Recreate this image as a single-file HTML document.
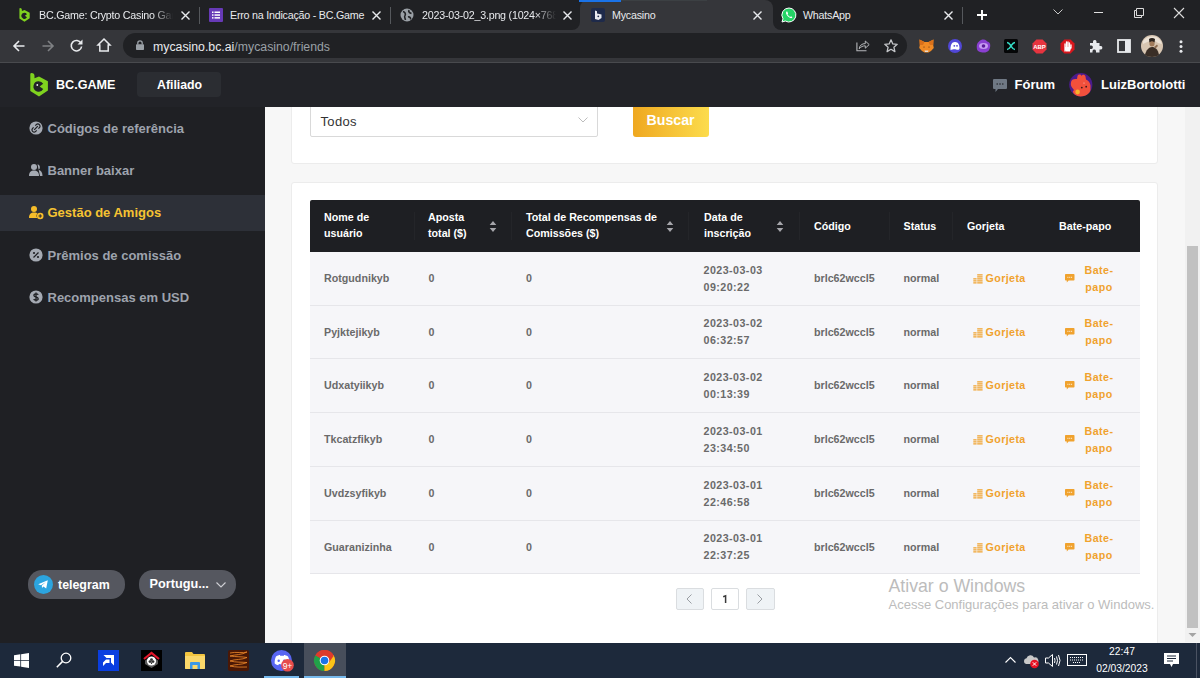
<!DOCTYPE html>
<html><head><meta charset="utf-8">
<style>
*{margin:0;padding:0;box-sizing:border-box}
html,body{width:1200px;height:678px;overflow:hidden;background:#f5f5f5;font-family:"Liberation Sans",sans-serif;position:relative}
.a{position:absolute}
svg{position:absolute;overflow:visible}
.tabt{position:absolute;color:#e8eaed;font-size:10.7px;top:8.3px;line-height:14px;white-space:nowrap;letter-spacing:-0.22px}
.sep{position:absolute;width:1px;height:17px;top:7px;background:#55585c}
.th{position:absolute;color:#fff;font-size:10.7px;font-weight:bold;line-height:16px;white-space:nowrap}
.td{position:absolute;color:#6a6a6a;font-size:10.7px;font-weight:bold;line-height:17px;white-space:nowrap}
.or{color:#f0a22e}
.sb{position:absolute;color:#9ea3ad;font-size:13px;font-weight:bold;white-space:nowrap;line-height:16px}

</style></head><body>
<!-- ===== content ===== -->
<div class="a" style="left:265px;top:107px;width:920px;height:535px;background:#f7f7f7"></div>
<div class="a" style="left:291px;top:90px;width:867px;height:74px;background:#fff;border:1px solid #ececec;border-radius:3px"></div>
<div class="a" style="left:310px;top:100px;width:288px;height:37px;background:#fff;border:1px solid #d9d9d9;border-radius:2px"></div>
<div class="a" style="left:320.5px;top:113.7px;font-size:13px;color:#333;letter-spacing:0.35px;line-height:16px;white-space:nowrap">Todos</div>
<svg style="left:578px;top:117px" width="10" height="6" viewBox="0 0 10 6"><path d="M0.5 0.5 L5 5 L9.5 0.5" stroke="#bdbdbd" stroke-width="1" fill="none"/></svg>
<div class="a" style="left:633px;top:100px;width:75.5px;height:37px;background:linear-gradient(90deg,#efa820,#fcdc4c);border-radius:3px"></div>
<div class="a" style="left:646.5px;top:112px;font-size:14.2px;font-weight:bold;color:#fff;line-height:16px;white-space:nowrap">Buscar</div>
<div class="a" style="left:291px;top:182px;width:867px;height:520px;background:#fff;border:1px solid #ececec;border-radius:3px"></div>
<div class="a" style="left:310px;top:200px;width:830px;height:51.5px;background:#1e1f23;border-radius:2px 2px 0 0"></div>
<div class="a" style="left:414px;top:212px;width:1px;height:28px;background:#242529"></div>
<div class="a" style="left:511px;top:212px;width:1px;height:28px;background:#242529"></div>
<div class="a" style="left:688px;top:212px;width:1px;height:28px;background:#242529"></div>
<div class="a" style="left:799px;top:212px;width:1px;height:28px;background:#242529"></div>
<div class="a" style="left:889px;top:212px;width:1px;height:28px;background:#242529"></div>
<div class="a" style="left:952px;top:212px;width:1px;height:28px;background:#242529"></div>
<div class="th" style="left:324px;top:209px">Nome de<br>usuário</div>
<div class="th" style="left:428px;top:209px">Aposta<br>total ($)</div>
<div class="th" style="left:526px;top:209px">Total de Recompensas de<br>Comissões ($)</div>
<div class="th" style="left:704px;top:209px">Data de<br>inscrição</div>
<div class="th" style="left:814px;top:217.5px">Código</div>
<div class="th" style="left:903.5px;top:217.5px">Status</div>
<div class="th" style="left:967px;top:217.5px">Gorjeta</div>
<div class="th" style="left:1059px;top:217.5px">Bate-papo</div>
<svg style="left:488.5px;top:220px" width="8" height="12" viewBox="0 0 8 12"><path d="M4 1 L7.3 5 H0.7 Z M4 12 L7.3 8 H0.7 Z" fill="#a5a5aa"/></svg>
<svg style="left:666px;top:220px" width="8" height="12" viewBox="0 0 8 12"><path d="M4 1 L7.3 5 H0.7 Z M4 12 L7.3 8 H0.7 Z" fill="#a5a5aa"/></svg>
<svg style="left:776px;top:220px" width="8" height="12" viewBox="0 0 8 12"><path d="M4 1 L7.3 5 H0.7 Z M4 12 L7.3 8 H0.7 Z" fill="#a5a5aa"/></svg>
<div class="a" style="left:310px;top:251.5px;width:830px;height:322px;background:#f6f6f9"></div>
<div class="a" style="left:310px;top:305px;width:830px;height:1px;background:#e6e6ea"></div>
<div class="a" style="left:310px;top:358px;width:830px;height:1px;background:#e6e6ea"></div>
<div class="a" style="left:310px;top:412px;width:830px;height:1px;background:#e6e6ea"></div>
<div class="a" style="left:310px;top:466px;width:830px;height:1px;background:#e6e6ea"></div>
<div class="a" style="left:310px;top:520px;width:830px;height:1px;background:#e6e6ea"></div>
<div class="a" style="left:310px;top:573px;width:830px;height:1px;background:#e6e6ea"></div>
<div class="td" style="left:324px;top:270.2px">Rotgudnikyb</div>
<div class="td" style="left:428.5px;top:270.2px">0</div>
<div class="td" style="left:526px;top:270.2px">0</div>
<div class="td" style="left:703.5px;top:261.7px;letter-spacing:0.45px">2023-03-03<br>09:20:22</div>
<div class="td" style="left:814px;top:270.2px">brlc62wccl5</div>
<div class="td" style="left:903.5px;top:270.2px">normal</div>
<svg style="left:973px;top:274.2px" width="10" height="9.5" viewBox="0 0 10 9.5"><path d="M4.2 0.9 H9.6 M4.2 2.9 H9.6 M4.2 4.9 H9.6 M4.2 6.9 H9.6 M4.2 8.9 H9.6 M0.3 4.9 H3.6 M0.3 6.9 H3.6 M0.3 8.9 H3.6" stroke="#f0a22e" stroke-width="1.15"/></svg>
<div class="td or" style="left:985.5px;top:270.2px;letter-spacing:0.4px">Gorjeta</div>
<svg style="left:1065px;top:274.2px" width="9.5" height="9" viewBox="0 0 9.5 9"><path d="M0.8 0 H8.7 Q9.5 0 9.5 0.8 V5.7 Q9.5 6.5 8.7 6.5 H3.6 L1.8 8.6 V6.5 H0.8 Q0 6.5 0 5.7 V0.8 Q0 0 0.8 0 Z" fill="#f0a22e"/><path d="M2.4 3.3 H3.4 M4.25 3.3 H5.25 M6.1 3.3 H7.1" stroke="#fff" stroke-width="0.9"/></svg>
<div class="td or" style="left:1079px;width:40px;text-align:center;top:261.7px;letter-spacing:0.45px">Bate-<br>papo</div>
<div class="td" style="left:324px;top:323.9px">Pyjktejikyb</div>
<div class="td" style="left:428.5px;top:323.9px">0</div>
<div class="td" style="left:526px;top:323.9px">0</div>
<div class="td" style="left:703.5px;top:315.4px;letter-spacing:0.45px">2023-03-02<br>06:32:57</div>
<div class="td" style="left:814px;top:323.9px">brlc62wccl5</div>
<div class="td" style="left:903.5px;top:323.9px">normal</div>
<svg style="left:973px;top:327.9px" width="10" height="9.5" viewBox="0 0 10 9.5"><path d="M4.2 0.9 H9.6 M4.2 2.9 H9.6 M4.2 4.9 H9.6 M4.2 6.9 H9.6 M4.2 8.9 H9.6 M0.3 4.9 H3.6 M0.3 6.9 H3.6 M0.3 8.9 H3.6" stroke="#f0a22e" stroke-width="1.15"/></svg>
<div class="td or" style="left:985.5px;top:323.9px;letter-spacing:0.4px">Gorjeta</div>
<svg style="left:1065px;top:327.9px" width="9.5" height="9" viewBox="0 0 9.5 9"><path d="M0.8 0 H8.7 Q9.5 0 9.5 0.8 V5.7 Q9.5 6.5 8.7 6.5 H3.6 L1.8 8.6 V6.5 H0.8 Q0 6.5 0 5.7 V0.8 Q0 0 0.8 0 Z" fill="#f0a22e"/><path d="M2.4 3.3 H3.4 M4.25 3.3 H5.25 M6.1 3.3 H7.1" stroke="#fff" stroke-width="0.9"/></svg>
<div class="td or" style="left:1079px;width:40px;text-align:center;top:315.4px;letter-spacing:0.45px">Bate-<br>papo</div>
<div class="td" style="left:324px;top:377.4px">Udxatyiikyb</div>
<div class="td" style="left:428.5px;top:377.4px">0</div>
<div class="td" style="left:526px;top:377.4px">0</div>
<div class="td" style="left:703.5px;top:368.9px;letter-spacing:0.45px">2023-03-02<br>00:13:39</div>
<div class="td" style="left:814px;top:377.4px">brlc62wccl5</div>
<div class="td" style="left:903.5px;top:377.4px">normal</div>
<svg style="left:973px;top:381.4px" width="10" height="9.5" viewBox="0 0 10 9.5"><path d="M4.2 0.9 H9.6 M4.2 2.9 H9.6 M4.2 4.9 H9.6 M4.2 6.9 H9.6 M4.2 8.9 H9.6 M0.3 4.9 H3.6 M0.3 6.9 H3.6 M0.3 8.9 H3.6" stroke="#f0a22e" stroke-width="1.15"/></svg>
<div class="td or" style="left:985.5px;top:377.4px;letter-spacing:0.4px">Gorjeta</div>
<svg style="left:1065px;top:381.4px" width="9.5" height="9" viewBox="0 0 9.5 9"><path d="M0.8 0 H8.7 Q9.5 0 9.5 0.8 V5.7 Q9.5 6.5 8.7 6.5 H3.6 L1.8 8.6 V6.5 H0.8 Q0 6.5 0 5.7 V0.8 Q0 0 0.8 0 Z" fill="#f0a22e"/><path d="M2.4 3.3 H3.4 M4.25 3.3 H5.25 M6.1 3.3 H7.1" stroke="#fff" stroke-width="0.9"/></svg>
<div class="td or" style="left:1079px;width:40px;text-align:center;top:368.9px;letter-spacing:0.45px">Bate-<br>papo</div>
<div class="td" style="left:324px;top:431.2px">Tkcatzfikyb</div>
<div class="td" style="left:428.5px;top:431.2px">0</div>
<div class="td" style="left:526px;top:431.2px">0</div>
<div class="td" style="left:703.5px;top:422.8px;letter-spacing:0.45px">2023-03-01<br>23:34:50</div>
<div class="td" style="left:814px;top:431.2px">brlc62wccl5</div>
<div class="td" style="left:903.5px;top:431.2px">normal</div>
<svg style="left:973px;top:435.2px" width="10" height="9.5" viewBox="0 0 10 9.5"><path d="M4.2 0.9 H9.6 M4.2 2.9 H9.6 M4.2 4.9 H9.6 M4.2 6.9 H9.6 M4.2 8.9 H9.6 M0.3 4.9 H3.6 M0.3 6.9 H3.6 M0.3 8.9 H3.6" stroke="#f0a22e" stroke-width="1.15"/></svg>
<div class="td or" style="left:985.5px;top:431.2px;letter-spacing:0.4px">Gorjeta</div>
<svg style="left:1065px;top:435.2px" width="9.5" height="9" viewBox="0 0 9.5 9"><path d="M0.8 0 H8.7 Q9.5 0 9.5 0.8 V5.7 Q9.5 6.5 8.7 6.5 H3.6 L1.8 8.6 V6.5 H0.8 Q0 6.5 0 5.7 V0.8 Q0 0 0.8 0 Z" fill="#f0a22e"/><path d="M2.4 3.3 H3.4 M4.25 3.3 H5.25 M6.1 3.3 H7.1" stroke="#fff" stroke-width="0.9"/></svg>
<div class="td or" style="left:1079px;width:40px;text-align:center;top:422.8px;letter-spacing:0.45px">Bate-<br>papo</div>
<div class="td" style="left:324px;top:485.1px">Uvdzsyfikyb</div>
<div class="td" style="left:428.5px;top:485.1px">0</div>
<div class="td" style="left:526px;top:485.1px">0</div>
<div class="td" style="left:703.5px;top:476.6px;letter-spacing:0.45px">2023-03-01<br>22:46:58</div>
<div class="td" style="left:814px;top:485.1px">brlc62wccl5</div>
<div class="td" style="left:903.5px;top:485.1px">normal</div>
<svg style="left:973px;top:489.1px" width="10" height="9.5" viewBox="0 0 10 9.5"><path d="M4.2 0.9 H9.6 M4.2 2.9 H9.6 M4.2 4.9 H9.6 M4.2 6.9 H9.6 M4.2 8.9 H9.6 M0.3 4.9 H3.6 M0.3 6.9 H3.6 M0.3 8.9 H3.6" stroke="#f0a22e" stroke-width="1.15"/></svg>
<div class="td or" style="left:985.5px;top:485.1px;letter-spacing:0.4px">Gorjeta</div>
<svg style="left:1065px;top:489.1px" width="9.5" height="9" viewBox="0 0 9.5 9"><path d="M0.8 0 H8.7 Q9.5 0 9.5 0.8 V5.7 Q9.5 6.5 8.7 6.5 H3.6 L1.8 8.6 V6.5 H0.8 Q0 6.5 0 5.7 V0.8 Q0 0 0.8 0 Z" fill="#f0a22e"/><path d="M2.4 3.3 H3.4 M4.25 3.3 H5.25 M6.1 3.3 H7.1" stroke="#fff" stroke-width="0.9"/></svg>
<div class="td or" style="left:1079px;width:40px;text-align:center;top:476.6px;letter-spacing:0.45px">Bate-<br>papo</div>
<div class="td" style="left:324px;top:538.5px">Guaranizinha</div>
<div class="td" style="left:428.5px;top:538.5px">0</div>
<div class="td" style="left:526px;top:538.5px">0</div>
<div class="td" style="left:703.5px;top:530.0px;letter-spacing:0.45px">2023-03-01<br>22:37:25</div>
<div class="td" style="left:814px;top:538.5px">brlc62wccl5</div>
<div class="td" style="left:903.5px;top:538.5px">normal</div>
<svg style="left:973px;top:542.5px" width="10" height="9.5" viewBox="0 0 10 9.5"><path d="M4.2 0.9 H9.6 M4.2 2.9 H9.6 M4.2 4.9 H9.6 M4.2 6.9 H9.6 M4.2 8.9 H9.6 M0.3 4.9 H3.6 M0.3 6.9 H3.6 M0.3 8.9 H3.6" stroke="#f0a22e" stroke-width="1.15"/></svg>
<div class="td or" style="left:985.5px;top:538.5px;letter-spacing:0.4px">Gorjeta</div>
<svg style="left:1065px;top:542.5px" width="9.5" height="9" viewBox="0 0 9.5 9"><path d="M0.8 0 H8.7 Q9.5 0 9.5 0.8 V5.7 Q9.5 6.5 8.7 6.5 H3.6 L1.8 8.6 V6.5 H0.8 Q0 6.5 0 5.7 V0.8 Q0 0 0.8 0 Z" fill="#f0a22e"/><path d="M2.4 3.3 H3.4 M4.25 3.3 H5.25 M6.1 3.3 H7.1" stroke="#fff" stroke-width="0.9"/></svg>
<div class="td or" style="left:1079px;width:40px;text-align:center;top:530.0px;letter-spacing:0.45px">Bate-<br>papo</div>
<div class="a" style="left:676px;top:588px;width:28px;height:22px;background:#eff3f6;border:1px solid #dadde0;border-radius:2px"></div>
<svg style="left:686px;top:594px" width="6" height="10" viewBox="0 0 6 10"><path d="M5.5 0.5 L1 5 L5.5 9.5" stroke="#9a9ea3" stroke-width="1" fill="none"/></svg>
<div class="a" style="left:711px;top:588px;width:28px;height:22px;background:#fff;border:1px solid #dadde0;border-radius:2px"></div>
<svg style="left:722px;top:595px" width="6" height="9" viewBox="0 0 6 9"><path d="M1.2 1.8 L3.6 0.9 V8.1" stroke="#3a3a3a" stroke-width="1.5" fill="none"/></svg>
<div class="a" style="left:746px;top:588px;width:29px;height:22px;background:#eff3f6;border:1px solid #dadde0;border-radius:2px"></div>
<svg style="left:757px;top:594px" width="6" height="10" viewBox="0 0 6 10"><path d="M0.5 0.5 L5 5 L0.5 9.5" stroke="#9a9ea3" stroke-width="1" fill="none"/></svg>
<div class="a" style="left:888.5px;top:575px;font-size:17.7px;color:#bcbcbc;line-height:22px;white-space:nowrap">Ativar o Windows</div>
<div class="a" style="left:888.5px;top:596.5px;font-size:13px;color:#bcbcbc;line-height:16px;white-space:nowrap">Acesse Configurações para ativar o Windows.</div>
<div class="a" style="left:1185px;top:107px;width:15px;height:535px;background:#f1f1f1"></div>
<div class="a" style="left:1187px;top:246px;width:11px;height:382px;background:#c1c1c1"></div>
<svg style="left:1188px;top:632px" width="9" height="6" viewBox="0 0 9 6"><path d="M0.5 1 L4.5 5 L8.5 1 Z" fill="#a3a3a3"/></svg>
<!-- ===== Chrome tab strip ===== -->
<div class="a" style="left:0;top:0;width:1200px;height:30px;background:#202124"></div>
<div class="a" style="left:580px;top:0;width:193px;height:31px;background:#35363a;border-radius:8px 8px 0 0"></div>
<div class="a" style="left:572px;top:22px;width:8px;height:8px;background:#35363a"></div>
<div class="a" style="left:564px;top:14px;width:16px;height:16px;background:#202124;border-radius:0 0 8px 0"></div>
<div class="a" style="left:773px;top:22px;width:8px;height:8px;background:#35363a"></div>
<div class="a" style="left:773px;top:14px;width:16px;height:16px;background:#202124;border-radius:0 0 0 8px"></div>
<div class="a" style="left:579px;top:0;width:42px;height:2px;background:#1a73e8"></div>
<div class="a" style="left:621px;top:0;width:86px;height:1px;background:#3c4043"></div>
<div class="sep" style="left:199px"></div>
<div class="sep" style="left:390px"></div>
<div class="sep" style="left:962px"></div>
<!-- tab1 -->
<svg style="left:19px;top:8px" width="11" height="14" viewBox="0 0 18 24"><path d="M0.3 1.2 Q0.3 0 1.5 0 Q4.5 0 4.5 3 V5.2 L9 3.6 L17.9 8.3 V17.6 L9 23.4 L0.3 18 Z" fill="#7fd21f"/><path d="M8.7 8.3 A5.2 5.2 0 1 0 13.2 16 L9.6 13.4 L13.2 10.8 A5.2 5.2 0 0 0 8.7 8.3 Z" fill="#202124"/></svg>
<div class="tabt" style="left:39px;width:134px;overflow:hidden;-webkit-mask-image:linear-gradient(90deg,#000 85%,transparent)">BC.Game: Crypto Casino Games</div>
<svg style="left:181px;top:11px" width="9" height="9" viewBox="0 0 9 9"><path d="M0.5 0.5 L8.5 8.5 M8.5 0.5 L0.5 8.5" stroke="#e8eaed" stroke-width="1.4"/></svg>
<!-- tab2 -->
<svg style="left:209px;top:8px" width="14" height="14" viewBox="0 0 14 14"><rect width="14" height="14" rx="1" fill="#673ab7"/><rect x="3" y="3.5" width="1.5" height="1.5" fill="#fff"/><rect x="5.5" y="3.5" width="5.5" height="1.5" fill="#fff"/><rect x="3" y="6.3" width="1.5" height="1.5" fill="#fff"/><rect x="5.5" y="6.3" width="5.5" height="1.5" fill="#fff"/><rect x="3" y="9.1" width="1.5" height="1.5" fill="#fff"/><rect x="5.5" y="9.1" width="5.5" height="1.5" fill="#fff"/></svg>
<div class="tabt" style="left:230px">Erro na Indicação - BC.Game</div>
<svg style="left:372px;top:11px" width="9" height="9" viewBox="0 0 9 9"><path d="M0.5 0.5 L8.5 8.5 M8.5 0.5 L0.5 8.5" stroke="#e8eaed" stroke-width="1.4"/></svg>
<!-- tab3 -->
<svg style="left:400px;top:8px" width="14" height="14" viewBox="0 0 14 14"><circle cx="7" cy="7" r="6.5" fill="#9aa0a6"/><path d="M3 3.5 C5 4 6 6 5 7.5 C4 8.5 5 10 5.5 12 M9 2 C8 4 10 5 11.5 5.5 M8 9 C9.5 8.5 11 9.5 10.5 11.5" stroke="#202124" stroke-width="1.6" fill="none"/></svg>
<div class="tabt" style="left:422px;width:134px;overflow:hidden;-webkit-mask-image:linear-gradient(90deg,#000 85%,transparent)">2023-03-02_3.png (1024×768)</div>
<svg style="left:563px;top:11px" width="9" height="9" viewBox="0 0 9 9"><path d="M0.5 0.5 L8.5 8.5 M8.5 0.5 L0.5 8.5" stroke="#e8eaed" stroke-width="1.4"/></svg>
<!-- active tab -->
<svg style="left:591px;top:8px" width="14" height="14" viewBox="0 0 14 14"><rect width="14" height="14" rx="2" fill="#1e2a4a"/><path d="M4 2.5 V11 L7.5 12 L10.5 10 V6.5 L6 5.5 V3.3 Z" fill="#e8eaf0"/><circle cx="7.3" cy="8.3" r="0.9" fill="#1e2a4a"/></svg>
<div class="tabt" style="left:612px">Mycasino</div>
<svg style="left:753px;top:11px" width="9" height="9" viewBox="0 0 9 9"><path d="M0.5 0.5 L8.5 8.5 M8.5 0.5 L0.5 8.5" stroke="#e8eaed" stroke-width="1.4"/></svg>
<!-- whatsapp -->
<svg style="left:781px;top:7px" width="16" height="16" viewBox="0 0 16 16"><path d="M8 1 A7 7 0 1 1 4.3 14 L1 15 L2 11.8 A7 7 0 0 1 8 1 Z" fill="#25d366" stroke="#fff" stroke-width="1"/><path d="M5.5 4.5 C5 5 4.8 6 5.5 7.5 C6.3 9 7.5 10.3 9.3 11 C10.5 11.4 11.2 10.8 11.4 10.2 L10 9.3 L9.2 9.9 C8.2 9.5 7 8.2 6.5 7.2 L7.1 6.4 L6.3 4.6 Z" fill="#fff"/></svg>
<div class="tabt" style="left:803px">WhatsApp</div>
<svg style="left:944px;top:11px" width="9" height="9" viewBox="0 0 9 9"><path d="M0.5 0.5 L8.5 8.5 M8.5 0.5 L0.5 8.5" stroke="#e8eaed" stroke-width="1.4"/></svg>
<!-- new tab + -->
<svg style="left:977px;top:10px" width="10" height="10" viewBox="0 0 10 10"><path d="M5 0 V10 M0 5 H10" stroke="#ffffff" stroke-width="1.9"/></svg>
<!-- window controls -->
<svg style="left:1053px;top:9px" width="10" height="6" viewBox="0 0 10 6"><path d="M0.5 0.5 L5 5 L9.5 0.5" stroke="#c7c7c7" stroke-width="1" fill="none"/></svg>
<svg style="left:1094px;top:12px" width="9" height="1" viewBox="0 0 9 1"><path d="M0 0.5 H9" stroke="#e0e0e0" stroke-width="1"/></svg>
<svg style="left:1134px;top:8px" width="10" height="10" viewBox="0 0 10 10"><path d="M2.5 2.5 H0.5 V9.5 H7.5 V7.5 M2.5 2.5 V0.5 H9.5 V7.5 H2.5 Z" stroke="#dcdcdc" stroke-width="1" fill="none"/></svg>
<svg style="left:1174px;top:8px" width="10" height="10" viewBox="0 0 10 10"><path d="M0 0 L10 10 M10 0 L0 10" stroke="#dcdcdc" stroke-width="1.1"/></svg>
<!-- ===== toolbar ===== -->
<div class="a" style="left:0;top:30px;width:1200px;height:32px;background:#35363a"></div>
<div class="a" style="left:0;top:62px;width:1200px;height:1px;background:#494a4e"></div>
<svg style="left:13px;top:40px" width="12" height="12" viewBox="0 0 12 12"><path d="M11.5 6 H1.2 M6 1 L1 6 L6 11" stroke="#e8eaed" stroke-width="1.6" fill="none"/></svg>
<svg style="left:42px;top:40px" width="12" height="12" viewBox="0 0 12 12"><path d="M0.5 6 H10.8 M6 1 L11 6 L6 11" stroke="#7f8184" stroke-width="1.6" fill="none"/></svg>
<svg style="left:70px;top:39px" width="13" height="13" viewBox="0 0 13 13"><path d="M11 4.2 A5.2 5.2 0 1 0 11.6 7.5" stroke="#e8eaed" stroke-width="1.6" fill="none"/><path d="M12.5 0.5 V5.5 H7.5 Z" fill="#e8eaed"/></svg>
<svg style="left:97px;top:38px" width="14" height="14" viewBox="0 0 14 14"><path d="M7 1 L13 7 H11.2 V13 H2.8 V7 H1 Z" stroke="#e8eaed" stroke-width="1.5" fill="none" stroke-linejoin="miter"/></svg>
<div class="a" style="left:123px;top:33px;width:784px;height:25px;background:#202124;border-radius:12.5px"></div>
<svg style="left:136px;top:40px" width="8" height="10" viewBox="0 0 8 10"><path d="M1.8 4.5 V3 A2.2 2.2 0 0 1 6.2 3 V4.5" stroke="#9aa0a6" stroke-width="1.3" fill="none"/><rect x="0" y="4.3" width="8" height="5.7" rx="0.8" fill="#9aa0a6"/></svg>
<div class="a" style="left:153px;top:39px;font-size:12.3px;line-height:16px;color:#e8eaed;white-space:nowrap">mycasino.bc.ai<span style="color:#9aa0a6">/mycasino/friends</span></div>
<svg style="left:856px;top:39px" width="14" height="13" viewBox="0 0 14 13"><path d="M0.9 3.5 V11.8 H10.5" stroke="#b5b7ba" stroke-width="1.1" fill="none"/><path d="M3.2 9.8 C3.6 6.3 6 4.6 9.3 4.6 V2 L13.2 5.6 L9.3 9.2 V6.8 C6.8 6.8 4.8 7.8 3.2 9.8 Z" stroke="#b5b7ba" stroke-width="1" fill="none" stroke-linejoin="round"/></svg>
<svg style="left:884px;top:39px" width="14" height="14" viewBox="0 0 14 14"><path d="M7 0.8 L8.8 4.9 L13.2 5.3 L9.9 8.2 L10.9 12.6 L7 10.3 L3.1 12.6 L4.1 8.2 L0.8 5.3 L5.2 4.9 Z" stroke="#c4c6c9" stroke-width="1.3" fill="none" stroke-linejoin="round"/></svg>
<!-- extensions -->
<svg style="left:918.5px;top:39px" width="15" height="14" viewBox="0 0 15 14"><path d="M0.5 0.5 L5.5 3 H9.5 L14.5 0.5 L14.2 6 L14.8 9 L12 12 L9.5 13.5 H5.5 L3 12 L0.2 9 L0.8 6 Z" fill="#f08a24"/><path d="M0.5 0.5 L5.5 3 L4 6 L0.8 6 Z M14.5 0.5 L9.5 3 L11 6 L14.2 6 Z" fill="#d9701a"/><path d="M5.5 11.5 H9.5 L9 13 H6 Z" fill="#e8dccf"/><circle cx="5" cy="8" r="0.6" fill="#5a3010"/><circle cx="10" cy="8" r="0.6" fill="#5a3010"/></svg>
<svg style="left:948px;top:39px" width="14" height="14" viewBox="0 0 14 14"><circle cx="7" cy="7" r="7" fill="#5147d6"/><path d="M2.5 11 C2.5 6 3.5 3 7 3 C10.5 3 11.5 6 11.5 9 C11.5 11 10 11 8 10.5 C6 10 4 11 2.5 11 Z" fill="#fff"/><circle cx="6.3" cy="6.8" r="0.9" fill="#5147d6"/><circle cx="9" cy="6.8" r="0.9" fill="#5147d6"/></svg>
<svg style="left:976px;top:39px" width="15" height="14" viewBox="0 0 15 14"><path d="M7.5 0.5 C10 0.5 10.5 2.5 12.5 3 C14.5 4 14.5 6.5 14 8.5 C13.5 11 12 13.5 8 13.5 C4 13.5 1 12.5 0.8 9 C0.5 6 1 4 3 2.5 C4.5 1 5.5 0.5 7.5 0.5 Z" fill="#8a3fd1"/><ellipse cx="7.5" cy="7" rx="4.5" ry="3" fill="#c79bf2"/><circle cx="7.5" cy="7" r="1.8" fill="#5b1c99"/></svg>
<svg style="left:1004px;top:39px" width="14" height="14" viewBox="0 0 14 14"><rect width="14" height="14" rx="1.5" fill="#050607"/><path d="M3 3.5 C5 3.5 6 5.5 7 7 C8 8.5 9 10.5 11 10.5 M3 10.5 C5 10.5 6 8.5 7 7 C8 5.5 9 3.5 11 3.5" stroke="#34d9c3" stroke-width="1.6" fill="none"/></svg>
<svg style="left:1032px;top:39px" width="15" height="15" viewBox="0 0 15 15"><path d="M4.4 0.5 H10.6 L14.5 4.4 V10.6 L10.6 14.5 H4.4 L0.5 10.6 V4.4 Z" fill="#e7343f"/><text x="7.5" y="10" font-family="Liberation Sans" font-weight="bold" font-size="6" fill="#fff" text-anchor="middle">ABP</text></svg>
<svg style="left:1060px;top:39px" width="15" height="15" viewBox="0 0 15 15"><path d="M4.4 0.5 H10.6 L14.5 4.4 V10.6 L10.6 14.5 H4.4 L0.5 10.6 V4.4 Z" fill="#d9161c"/><path d="M5 12 V5 M6.5 11 V3 M8 11 V3 M9.5 11 V4 M11 9 V6" stroke="#fff" stroke-width="1.3" stroke-linecap="round"/><path d="M5 11 L6 12.5 H10 L11 9 V8 L5 8 Z" fill="#fff"/></svg>
<svg style="left:1089px;top:39px" width="14" height="14" viewBox="0 0 14 14"><path d="M1 4 H4 V2.5 A1.8 1.8 0 0 1 7.5 2.5 V4 H10.5 V7 H12 A1.8 1.8 0 0 1 12 10.5 H10.5 V13.5 H7 V12 A1.8 1.8 0 0 0 3.5 12 V13.5 H1 V10 H2.5 A1.8 1.8 0 0 0 2.5 6.5 H1 Z" fill="#e8eaed"/></svg>
<svg style="left:1117px;top:39px" width="14" height="14" viewBox="0 0 14 14"><rect x="1" y="1" width="12" height="12" stroke="#e8eaed" stroke-width="1.8" fill="none"/><rect x="8" y="1" width="5" height="12" fill="#e8eaed"/></svg>
<svg style="left:1141px;top:35px" width="22" height="22" viewBox="0 0 22 22"><circle cx="11" cy="11" r="11" fill="#d8c6b2"/><path d="M2 6 C5 2 9 1 13 1.5 C17 2 20 5 21 9 L17 8 C15 6 12 5 9 6 C6 7 4 8 2 9 Z" fill="#ece2d6"/><path d="M8 4 C9.5 2.8 12.5 2.8 14 4 L13.6 7.5 L8.4 7.5 Z" fill="#2a221c"/><circle cx="11" cy="8.8" r="2.6" fill="#a07a5a"/><path d="M4 20 C5 15 8 12 11 12 C14 12 17 14 18 20 C15 22.5 7 22.5 4 20 Z" fill="#3a2e26"/><path d="M13 12 L16 9.5 L17 11 L14.5 13.5 Z" fill="#8b6b50"/></svg>
<svg style="left:1179px;top:40px" width="4" height="13" viewBox="0 0 4 13"><circle cx="2" cy="1.8" r="1.5" fill="#e8eaed"/><circle cx="2" cy="6.5" r="1.5" fill="#e8eaed"/><circle cx="2" cy="11.2" r="1.5" fill="#e8eaed"/></svg>
<!-- ===== BC header ===== -->
<div class="a" style="left:0;top:63px;width:1200px;height:44px;background:#222328"></div>
<svg style="left:30px;top:72.7px" width="18" height="24" viewBox="0 0 18 24"><path d="M0.3 1.2 Q0.3 0 1.5 0 Q4.5 0 4.5 3 V5.2 L9 3.6 L17.9 8.3 V17.6 L9 23.4 L0.3 18 Z" fill="#7fd21f"/><path d="M8.7 8.3 A5.2 5.2 0 1 0 13.2 16 L9.6 13.4 L13.2 10.8 A5.2 5.2 0 0 0 8.7 8.3 Z" fill="#222328"/><circle cx="7.3" cy="12" r="0.9" fill="#eee"/></svg>
<div class="a" style="left:56px;top:78px;font-size:12.6px;font-weight:bold;color:#fff;line-height:15px;white-space:nowrap">BC.GAME</div>
<div class="a" style="left:137px;top:72px;width:84px;height:25px;background:#2b2d32;border-radius:4px"></div>
<div class="a" style="left:157px;top:78px;font-size:12.3px;font-weight:bold;color:#fff;line-height:15px;white-space:nowrap">Afiliado</div>
<svg style="left:993px;top:79px" width="14" height="14" viewBox="0 0 14 14"><path d="M1 0 H13 Q14 0 14 1 V9 Q14 10 13 10 H5 L2.5 13 V10 H1 Q0 10 0 9 V1 Q0 0 1 0 Z" fill="#6f7884"/><circle cx="4.2" cy="5" r="0.8" fill="#222328"/><circle cx="7" cy="5" r="0.8" fill="#222328"/><circle cx="9.8" cy="5" r="0.8" fill="#222328"/></svg>
<div class="a" style="left:1014.5px;top:77px;font-size:13px;font-weight:bold;color:#fff;line-height:15px;white-space:nowrap">Fórum</div>
<svg style="left:1069px;top:73px" width="24" height="24" viewBox="0 0 24 24"><circle cx="11.8" cy="11.7" r="11.6" fill="#4b1b8c"/><path d="M2 9.5 C2 6.5 5 5.5 8 6 L8.5 3 C9.5 1 12 1.2 12.5 3 C13.5 1 16 1.5 16.5 3.5 L17 6.5 C19.5 7.5 21 9.5 21.5 12.5 L21.5 17 C20.5 21 16 23.5 11.5 23.4 C7.5 23.2 4.5 21.5 3.8 18.5 L5 17 L3 14.5 C1.8 13 1.6 11 2 9.5 Z" fill="#f2503c"/><ellipse cx="8.6" cy="19" rx="2.3" ry="2.4" fill="#f5b32a"/><circle cx="12.8" cy="14.6" r="0.9" fill="#3a1a1a"/><circle cx="17.2" cy="13.7" r="0.9" fill="#3a1a1a"/><circle cx="15" cy="10" r="0.6" fill="#ffd0c8"/></svg>
<div class="a" style="left:1101px;top:77px;font-size:13px;font-weight:bold;color:#fff;line-height:15px;white-space:nowrap">LuizBortolotti</div>
<!-- ===== sidebar ===== -->
<div class="a" style="left:0;top:107px;width:265px;height:536px;background:#1f2024"></div>
<div class="a" style="left:0;top:195px;width:265px;height:36px;background:#2d3038"></div>
<svg style="left:29px;top:121px" width="14" height="14" viewBox="0 0 14 14"><circle cx="7" cy="7" r="6.6" fill="#a5aab3"/><path d="M5.2 8.8 L8.8 5.2 M6.3 4.6 L7.3 3.6 A1.7 1.7 0 0 1 10.4 6.7 L9.4 7.7 M7.7 9.4 L6.7 10.4 A1.7 1.7 0 0 1 3.6 7.3 L4.6 6.3" stroke="#1e1f23" stroke-width="1.2" fill="none"/></svg>
<div class="sb" style="left:47.5px;top:120.6px">Códigos de referência</div>
<svg style="left:29px;top:163px" width="14" height="14" viewBox="0 0 14 14"><circle cx="5" cy="4" r="3" fill="#a5aab3"/><path d="M0 13 C0 9 2 7.5 5 7.5 C8 7.5 10 9 10 13 Z" fill="#a5aab3"/><path d="M8.5 1.3 A3 3 0 0 1 9.5 6.8 C12 7.5 13.5 9.5 13.5 13 H11" fill="#a5aab3"/></svg>
<div class="sb" style="left:47.5px;top:162.6px">Banner baixar</div>
<svg style="left:29px;top:205px" width="15" height="15" viewBox="0 0 15 15"><circle cx="5" cy="4" r="3" fill="#f6bd2a"/><path d="M0 13 C0 9 2 7.5 5 7.5 C7 7.5 8 8 8.5 8.5 A3.5 3.5 0 0 0 8.3 13 Z" fill="#f6bd2a"/><circle cx="11.2" cy="11" r="3.3" fill="#f6bd2a"/><path d="M11.2 9.3 V12.7 M9.5 11 H12.9" stroke="#2c2e35" stroke-width="1.1"/></svg>
<div class="sb" style="left:47.5px;top:205px;color:#f6c332">Gestão de Amigos</div>
<svg style="left:29px;top:248px" width="14" height="14" viewBox="0 0 14 14"><circle cx="7" cy="7" r="6.6" fill="#a5aab3"/><path d="M4.5 9.5 L9.5 4.5" stroke="#1e1f23" stroke-width="1.2"/><circle cx="5" cy="5" r="1.1" fill="#1e1f23"/><circle cx="9" cy="9" r="1.1" fill="#1e1f23"/></svg>
<div class="sb" style="left:47.5px;top:247.6px">Prêmios de comissão</div>
<svg style="left:29px;top:290px" width="14" height="14" viewBox="0 0 14 14"><circle cx="7" cy="7" r="6.6" fill="#a5aab3"/><path d="M9.2 4.8 C8.8 4 8 3.8 7 3.8 C5.7 3.8 4.9 4.5 4.9 5.4 C4.9 7.5 9.2 6.5 9.2 8.7 C9.2 9.6 8.3 10.2 7 10.2 C6 10.2 5.1 9.9 4.7 9.1 M7 2.6 V11.4" stroke="#1e1f23" stroke-width="1.3" fill="none"/></svg>
<div class="sb" style="left:47.5px;top:289.6px">Recompensas em USD</div>
<!-- bottom pills -->
<div class="a" style="left:28px;top:570px;width:97px;height:28.5px;background:#55575f;border-radius:14px"></div>
<svg style="left:33.5px;top:574.8px" width="19" height="19" viewBox="0 0 19 19"><circle cx="9.5" cy="9.5" r="9.5" fill="#2ca5e0"/><path d="M4.2 9.3 L13.8 5.3 L12.2 13.6 L9.4 11.6 L8 13 L7.8 10.6 L12 6.9 L6.9 10.2 Z" fill="#fff"/></svg>
<div class="a" style="left:58px;top:577px;font-size:12.4px;font-weight:bold;color:#fff;line-height:16px;white-space:nowrap">telegram</div>
<div class="a" style="left:139px;top:570px;width:97px;height:28.5px;background:#55575f;border-radius:14px"></div>
<div class="a" style="left:149.5px;top:576px;font-size:12.7px;font-weight:bold;color:#fff;line-height:16px;white-space:nowrap">Portugu...</div>
<svg style="left:216px;top:582px" width="10" height="6" viewBox="0 0 10 6"><path d="M0.5 0.5 L5 5 L9.5 0.5" stroke="#d0d0d5" stroke-width="1.1" fill="none"/></svg>
<!-- ===== taskbar ===== -->
<div class="a" style="left:0;top:642.5px;width:1200px;height:36px;background:#1d293b"></div>
<svg style="left:14px;top:653px" width="15" height="15" viewBox="0 0 15 15"><path d="M0 2.2 L6.3 1.3 V7 H0 Z M7.1 1.2 L15 0 V7 H7.1 Z M0 7.8 H6.3 V13.6 L0 12.8 Z M7.1 7.8 H15 V15 L7.1 13.8 Z" fill="#ffffff"/></svg>
<svg style="left:56px;top:652px" width="16" height="16" viewBox="0 0 16 16"><circle cx="10" cy="6" r="4.8" stroke="#fff" stroke-width="1.3" fill="none"/><path d="M6.6 9.4 L0.8 15.2" stroke="#fff" stroke-width="1.5"/></svg>
<div class="a" style="left:98px;top:650px;width:21px;height:21px;background:#0a3ee0"></div>
<svg style="left:98px;top:650px" width="21" height="21" viewBox="0 0 21 21"><path d="M5.5 5 H16 V15.5 L13 12.5 V8 H8.5 Z" fill="#fff"/><path d="M8 9.5 H11.5 V13 H8 L5 16 V12.5 Z" fill="#fff"/></svg>
<div class="a" style="left:141px;top:650px;width:21px;height:21px;background:#000"></div>
<svg style="left:141px;top:650px" width="21" height="21" viewBox="0 0 21 21"><path d="M3 9 L10.5 3 L18 9" stroke="#e3162a" stroke-width="2.2" fill="none"/><path d="M4 10.5 L10.5 6.5 L17 10.5 V14 L10.5 18 L4 14 Z" fill="#5a5a5a"/><circle cx="10.5" cy="11" r="4.6" fill="#fff"/><circle cx="10.5" cy="9.6" r="1.4" fill="#333"/><circle cx="9" cy="11.6" r="1.4" fill="#333"/><circle cx="12" cy="11.6" r="1.4" fill="#333"/><path d="M10.5 11 L9.8 14 H11.2 Z" fill="#333"/></svg>
<svg style="left:185px;top:652px" width="20" height="17" viewBox="0 0 20 17"><path d="M0 1 Q0 0 1 0 H7 L8.5 2 H19 Q20 2 20 3 V16 Q20 17 19 17 H1 Q0 17 0 16 Z" fill="#f3c53f"/><path d="M0 4 H20 V16 Q20 17 19 17 H1 Q0 17 0 16 Z" fill="#fbd86a"/><path d="M5 17 V11 Q5 10 6 10 H14 Q15 10 15 11 V17 H12.5 V13 H7.5 V17 Z" fill="#3c98e6"/></svg>
<div class="a" style="left:228px;top:650px;width:21px;height:20.5px;background:#4a1705;border-radius:2px"></div><svg style="left:228px;top:650px" width="21" height="21" viewBox="0 0 21 21"><path d="M2 3 C8 1.5 15 3.5 19 2 M19 2 C14 5 7 4.5 2 6 M2 6 C8 7 14 6.5 19 7.5 M19 7.5 C14 10 7 9 2 11 M2 11 C8 12.5 14 12 19 12.5 M19 12.5 C14 15 7 14 2 16 M2 16 C8 17.5 14 17 19 17" stroke="#f08a2a" stroke-width="0.9" fill="none" opacity="0.9"/></svg>
<svg style="left:270.5px;top:650px" width="27" height="23" viewBox="0 0 27 23"><circle cx="10.5" cy="10.5" r="10.5" fill="#5865f2"/><path d="M5 6.5 C6.5 5.5 8 5 9 5 L9.5 6 C10.5 5.8 11.5 5.8 12.5 6 L13 5 C14 5 15.5 5.5 17 6.5 C18 8.5 18.5 11 18.3 13.5 C17 14.5 15.7 15 14.8 15.2 L14 14 C12 14.6 10 14.6 8 14 L7.2 15.2 C6.3 15 5 14.5 3.7 13.5 C3.5 11 4 8.5 5 6.5 Z" fill="#fff"/><circle cx="7.7" cy="10.8" r="1.2" fill="#5865f2"/><circle cx="13.3" cy="10.8" r="1.2" fill="#5865f2"/><circle cx="16.5" cy="15.3" r="6.3" fill="#e74c4c"/><text x="16.5" y="18.5" font-family="Liberation Sans" font-size="8.5" fill="#fff" text-anchor="middle">9+</text></svg>
<div class="a" style="left:264px;top:676px;width:35px;height:2px;background:#76b9ed"></div>
<div class="a" style="left:303.5px;top:642.5px;width:42.5px;height:36px;background:#474e5b"></div>
<div class="a" style="left:303.5px;top:676px;width:42.5px;height:2px;background:#76b9ed"></div>
<svg style="left:314px;top:650px" width="21" height="21" viewBox="0 0 21 21"><circle cx="10.5" cy="10.5" r="10.5" fill="#dd3b2c"/><path d="M10.5 10.5 L1.4 5.25 A10.5 10.5 0 0 0 10.5 21 Z" fill="#21a249"/><path d="M10.5 10.5 L10.5 21 A10.5 10.5 0 0 0 19.6 5.25 Z" fill="#fbc417"/><path d="M10.5 10.5 L1.4 5.25 A10.5 10.5 0 0 1 19.6 5.25 Z" fill="#dd3b2c"/><path d="M10.5 6 H19.6 L15 12.5 Z" fill="#dd3b2c"/><circle cx="10.5" cy="10.5" r="4.8" fill="#fff"/><circle cx="10.5" cy="10.5" r="3.8" fill="#1a73e8"/></svg>
<!-- tray -->
<div class="a" style="left:1195.5px;top:643px;width:1px;height:35px;background:#4a5262"></div>
<svg style="left:1005px;top:657px" width="11" height="6" viewBox="0 0 11 6"><path d="M0.5 5.5 L5.5 0.5 L10.5 5.5" stroke="#fff" stroke-width="1.1" fill="none"/></svg>
<svg style="left:1023px;top:654px" width="17" height="15" viewBox="0 0 17 15"><path d="M3 10 A3 3 0 0 1 3.5 4.2 A4 4 0 0 1 11 3.5 A3.2 3.2 0 0 1 13 10 Z" fill="#c9c9c9"/><circle cx="11.5" cy="10" r="4.3" fill="#e81123"/><path d="M9.8 8.3 L13.2 11.7 M13.2 8.3 L9.8 11.7" stroke="#fff" stroke-width="1"/></svg>
<svg style="left:1045px;top:653px" width="16" height="15" viewBox="0 0 16 15"><path d="M0.5 5 H3.5 L7.5 1.5 V13.5 L3.5 10 H0.5 Z" stroke="#fff" stroke-width="1" fill="none"/><path d="M9.5 5 Q10.5 7.5 9.5 10 M11.5 3.5 Q13.5 7.5 11.5 11.5 M13.5 2 Q16.5 7.5 13.5 13" stroke="#fff" stroke-width="1" fill="none"/></svg>
<svg style="left:1067px;top:654px" width="20" height="12" viewBox="0 0 20 12"><rect x="0.5" y="0.5" width="19" height="11" stroke="#fff" stroke-width="1" fill="none"/><path d="M3 3.5 H17 M3 6 H17 M6 8.5 H14" stroke="#fff" stroke-width="1" stroke-dasharray="1 1"/></svg>
<div class="a" style="left:1092px;top:644.2px;width:60px;text-align:center;font-size:10.3px;color:#fff;line-height:16.6px">22:47<br>02/03/2023</div>
<svg style="left:1164px;top:653px" width="15" height="15" viewBox="0 0 15 15"><path d="M0 0 H15 V11 H9 L7.5 14 L6 11 H0 Z" fill="#fff"/><path d="M3 3 H12 M3 5.5 H12 M3 8 H9" stroke="#1d293b" stroke-width="1"/></svg>

</body></html>
